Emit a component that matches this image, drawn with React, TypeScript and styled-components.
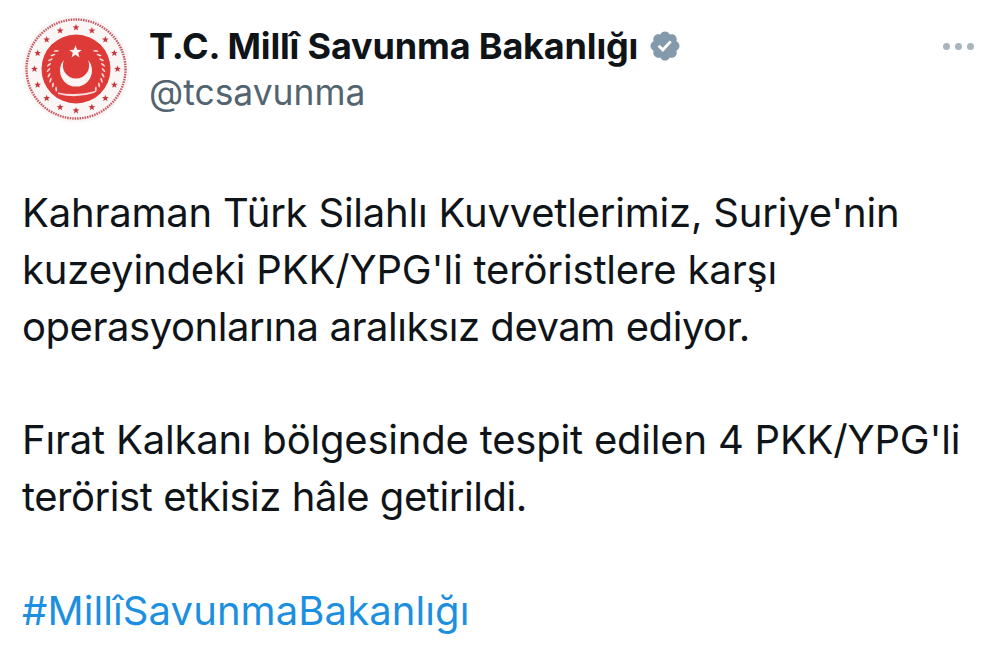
import React from 'react';
import styled, { createGlobalStyle } from 'styled-components';

const GlobalStyle = createGlobalStyle`
    html, body {
        margin: 0;
        padding: 0;
        background: #ffffff;
    }
`;

const Page = styled.div`
    width: 1000px;
    height: 671px;
    overflow: hidden;
    background: #ffffff;
    font-family: Inter, 'Liberation Sans', sans-serif;
    color: #0f1419;
    box-sizing: border-box;
    padding: 15px 22px 0 22px;
`;

const Header = styled.div`
    display: flex;
    align-items: flex-start;
`;

const Avatar = styled.svg`
    width: 108px;
    height: 108px;
    flex-shrink: 0;
    display: block;
`;

const Names = styled.div`
    display: flex;
    flex-direction: column;
    margin-left: 19px;
    margin-top: 9px;
`;

const NameRow = styled.div`
    display: flex;
    align-items: center;
    gap: 10px;
`;

const Name = styled.span`
    font-size: 36px;
    font-weight: 700;
    line-height: 44px;
    letter-spacing: -0.17px;
    white-space: nowrap;
`;

const Handle = styled.span`
    font-size: 35.4px;
    font-weight: 400;
    line-height: 44px;
    margin-top: 3px;
    color: #536471;
    white-space: nowrap;
`;

const More = styled.div`
    margin-left: auto;
    margin-top: 28px;
    margin-right: 4px;
    display: flex;
    gap: 5px;
`;

const Dot = styled.span`
    width: 7px;
    height: 7px;
    border-radius: 50%;
    background: #a9b4bd;
`;

const Body = styled.div`
    margin-top: 62px;
    font-size: 40px;
    line-height: 56.8px;
    font-weight: 400;
`;

const Line = styled.div<{ $tracking: number }>`
    white-space: nowrap;
    letter-spacing: ${p => p.$tracking}px;
`;

const Gap = styled.div`
    height: 56.8px;
`;

const Hashtag = styled(Line)`
    color: #1d8fe0;
`;

const starPath = (cx: number, cy: number, r: number) => {
    const pts: string[] = [];
    for (let i = 0; i < 10; i++) {
        const rad = i % 2 === 0 ? r : r * 0.42;
        const a = (Math.PI / 5) * i - Math.PI / 2;
        pts.push(`${(cx + rad * Math.cos(a)).toFixed(2)},${(cy + rad * Math.sin(a)).toFixed(2)}`);
    }
    return pts.join(' ');
};

const ringStars = Array.from({ length: 16 }, (_, i) => {
    const a = (Math.PI / 8) * i - Math.PI / 2;
    return { x: 54 + 41.5 * Math.cos(a), y: 54 + 41.5 * Math.sin(a) };
});

const leaves = Array.from({ length: 9 }, (_, i) => (Math.PI / 180) * (-44 + i * 11));

const Emblem = () => (
    <Avatar viewBox="0 0 108 108">
        <circle cx="54" cy="54" r="53.5" fill="#fbf6f6" />
        <circle cx="54" cy="54" r="49.5" fill="none" stroke="#c2555e" strokeWidth="2.4" strokeDasharray="1.5 1" />
        <circle cx="54" cy="54" r="34.5" fill="#de3a38" />
        {ringStars.map((s, i) => (
            <polygon key={i} points={starPath(s.x, s.y, 3.6)} fill="#c9363c" />
        ))}
        {leaves.map((a, i) => (
            <g key={i}>
                <ellipse
                    cx={54 + 27.5 * Math.cos(a)}
                    cy={55 + 27.5 * Math.sin(a)}
                    rx="2.6"
                    ry="0.9"
                    fill="#f6dcdc"
                    transform={`rotate(${(a * 180) / Math.PI + 50} ${54 + 27.5 * Math.cos(a)} ${55 + 27.5 * Math.sin(a)})`}
                />
                <ellipse
                    cx={54 - 27.5 * Math.cos(a)}
                    cy={55 + 27.5 * Math.sin(a)}
                    rx="2.6"
                    ry="0.9"
                    fill="#f6dcdc"
                    transform={`rotate(${-(a * 180) / Math.PI - 50} ${54 - 27.5 * Math.cos(a)} ${55 + 27.5 * Math.sin(a)})`}
                />
            </g>
        ))}
        <path d="M42 45 A16 16 0 1 0 66 45 A13.15 13.15 0 1 1 42 45 Z" fill="#fdf5f3" />
        <polygon points={starPath(53.5, 37, 6.7)} fill="#fdf5f3" />
        <path d="M36 79 Q54 84 72 78 L75 75.5 Q54 81.5 36 77.5 Z" fill="#f6dcdc" />
    </Avatar>
);

const Verified = () => (
    <svg width="34" height="34" viewBox="0 0 22 22">
        <path
            fill="#829aab"
            d="M20.396 11c-.018-.646-.215-1.275-.57-1.816-.354-.54-.852-.972-1.438-1.246.223-.607.27-1.264.14-1.897-.131-.634-.437-1.218-.882-1.687-.47-.445-1.053-.75-1.687-.882-.633-.13-1.29-.083-1.897.14-.273-.587-.704-1.086-1.245-1.44S11.647 1.62 11 1.604c-.646.017-1.273.213-1.813.568s-.969.854-1.24 1.44c-.608-.223-1.267-.272-1.902-.14-.635.13-1.22.436-1.69.882-.445.47-.749 1.055-.878 1.688-.13.633-.08 1.29.144 1.896-.587.274-1.087.705-1.443 1.245-.356.54-.555 1.17-.574 1.817.02.647.218 1.276.574 1.817.356.54.856.972 1.443 1.245-.224.606-.274 1.263-.144 1.896.13.634.433 1.218.877 1.688.47.443 1.054.747 1.687.878.633.132 1.29.084 1.897-.136.274.586.705 1.084 1.246 1.439.54.354 1.17.551 1.816.569.647-.016 1.276-.213 1.817-.567s.972-.854 1.245-1.44c.604.239 1.266.296 1.903.164.636-.132 1.22-.447 1.68-.907.46-.46.776-1.044.908-1.681s.075-1.299-.165-1.903c.586-.274 1.084-.705 1.439-1.246.354-.54.551-1.17.569-1.816z"
        />
        <path fill="#ffffff" d="M9.662 14.85l-3.429-3.428 1.293-1.302 2.072 2.072 4.4-4.794 1.347 1.246z" />
    </svg>
);

export default function App() {
    return (
        <Page>
            <GlobalStyle />
            <Header>
                <Emblem />
                <Names>
                    <NameRow>
                        <Name>T.C. Millî Savunma Bakanlığı</Name>
                        <Verified />
                    </NameRow>
                    <Handle>@tcsavunma</Handle>
                </Names>
                <More>
                    <Dot />
                    <Dot />
                    <Dot />
                </More>
            </Header>
            <Body>
                <Line $tracking={-0.2}>Kahraman Türk Silahlı Kuvvetlerimiz, Suriye'nin</Line>
                <Line $tracking={-0.15}>kuzeyindeki PKK/YPG'li teröristlere karşı</Line>
                <Line $tracking={-0.45}>operasyonlarına aralıksız devam ediyor.</Line>
                <Gap />
                <Line $tracking={-0.2}>Fırat Kalkanı bölgesinde tespit edilen 4 PKK/YPG'li</Line>
                <Line $tracking={-0.45}>terörist etkisiz hâle getirildi.</Line>
                <Gap />
                <Hashtag $tracking={0.1}>#MillîSavunmaBakanlığı</Hashtag>
            </Body>
        </Page>
    );
}
